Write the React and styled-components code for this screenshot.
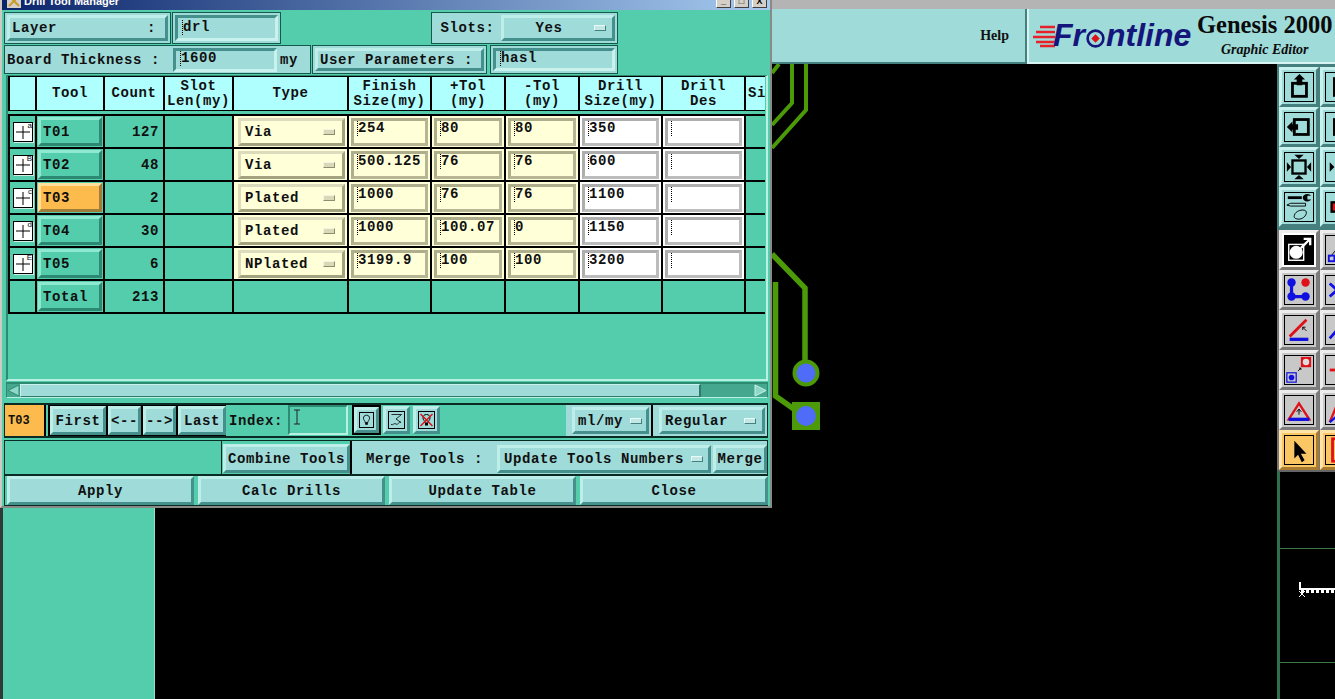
import React from 'react';
import styled, { createGlobalStyle, css } from 'styled-components';

const TEAL = '#54cdac';
const PANEL = '#9edbd9';
const mono = `'Liberation Mono', 'Courier New', monospace`;

const GlobalStyle = createGlobalStyle`
  html, body { margin: 0; padding: 0; background: #000; }
  body { width: 1335px; height: 699px; overflow: hidden; font-family: ${mono}; }
  * { box-sizing: border-box; }
`;

const raised = css`
  border: 3px solid;
  border-color: #bdeeea #45908c #45908c #bdeeea;
`;

const sunken = css`
  border: 3px solid;
  border-color: #45908c #c9f1ee #c9f1ee #45908c;
`;

/* ---------- application behind the dialog ---------- */

const Desktop = styled.div`
  position: relative;
  width: 1335px;
  height: 699px;
  overflow: hidden;
  display: grid;
  grid-template-rows: 9px 55px 1fr;
  background: #000;
`;

const TopStrip = styled.div`
  background: #b4b4b4;
`;

const TopBar = styled.div`
  display: flex;
  background: ${PANEL};
`;

const HelpArea = styled.div`
  width: 1027px;
  display: flex;
  align-items: center;
  justify-content: flex-end;
  padding-right: 16px;
  border-right: 2px solid #45807e;
  border-bottom: 2px solid #45807e;
  font: bold 14px 'Liberation Serif', serif;
  color: #111;
`;

const LogoArea = styled.div`
  flex: 1;
  display: flex;
  align-items: center;
  border-left: 2px solid #d8f4f2;
  border-bottom: 2px solid #d8f4f2;
  padding-left: 4px;
`;

const Speed = styled.svg`
  width: 22px;
  height: 24px;
  margin: 1px -2px 0 0;
`;

const Frontline = styled.div`
  display: flex;
  align-items: center;
  font: italic bold 32px 'Liberation Sans', sans-serif;
  color: #14167c;
  width: 142px;
`;

const OGlyph = styled.svg`
  width: 21px;
  height: 21px;
  margin: 6px 0 0 0;
`;

const Product = styled.div`
  display: flex;
  flex-direction: column;
  align-items: center;
  font-family: 'Liberation Serif', serif;
  color: #0b0b0b;
  margin-left: 2px;
  margin-top: 1px;
`;

const ProductName = styled.div`
  font-size: 24.5px;
  font-weight: bold;
  line-height: 28px;
  white-space: nowrap;
`;

const ProductSub = styled.div`
  font-size: 14px;
  font-weight: bold;
  font-style: italic;
  line-height: 22px;
`;

const Main = styled.div`
  display: grid;
  grid-template-columns: 155px 1122px 58px;
  min-height: 0;
`;

const LeftPanel = styled.div`
  background: ${TEAL};
  border-left: 3px solid #2f3a38;
  border-right: 1px solid #8fe0cc;
`;

const Canvas = styled.div`
  background: #000;
  overflow: hidden;
`;

const Traces = styled.svg`
  display: block;
`;

const RightColumn = styled.div`
  display: flex;
  flex-direction: column;
  overflow: hidden;
`;

const PaletteGroup = styled.div`
  height: ${({ $h }) => $h}px;
  padding: ${({ $pt }) => $pt}px 0 0 2px;
  display: grid;
  grid-template-columns: 40px 40px;
  grid-auto-rows: 40px;
  column-gap: 1px;
  background: ${({ $bg }) => $bg};
`;

const PaletteBtn = styled.div`
  width: 40px;
  height: 40px;
  padding: 2px;
  border: 3px solid;
  background: ${({ $tone }) =>
    $tone === 'teal' ? PANEL :
    $tone === 'orange' ? '#fbc765' :
    $tone === 'black' ? '#fff' : '#c8c8c8'};
  border-color: ${({ $tone }) =>
    $tone === 'teal' ? '#c9f1ee #45807e #45807e #c9f1ee' :
    $tone === 'orange' ? '#ffe3a8 #a87c30 #a87c30 #ffe3a8' :
    '#ededed #7c7c7c #7c7c7c #ededed'};
  svg { display: block; width: 100%; height: 100%; border: 1px solid #000; }
`;

const Preview = styled.div`
  flex: 1;
  display: flex;
  flex-direction: column;
  border-left: 3px solid #2f6f50;
  border-top: 2px solid #666;
`;

const PreviewFrame = styled.div`
  margin-top: 76px;
  height: 115px;
  border-top: 1px solid #3c7a4a;
  border-bottom: 1px solid #3c7a4a;
  padding: 33px 0 0 19px;
`;

/* ---------- dialog ---------- */

const Dialog = styled.div`
  position: absolute;
  left: 0;
  top: -10px;
  width: 772px;
  height: 518px;
  border: 2px solid #cfcbc3;
  border-right-color: #8a8a86;
  border-bottom-color: #8a8a86;
  background: ${TEAL};
  display: flex;
  flex-direction: column;
`;

const TitleBar = styled.div`
  height: 18px;
  display: flex;
  align-items: center;
  gap: 3px;
  padding: 0 3px 0 5px;
  background: linear-gradient(90deg, #0a246a, #a6caf0);
  color: #fff;
  font: bold 11px 'Liberation Sans', sans-serif;
`;

const TitleIcon = styled.svg`
  width: 14px;
  height: 14px;
  background: #d4d0c8;
`;

const TitleText = styled.span`
  flex: 1;
`;

const WinBtn = styled.span`
  width: 15px;
  height: 14px;
  background: #d4d0c8;
  border: 1px solid;
  border-color: #fff #404040 #404040 #fff;
  color: #000;
  font: bold 9px 'Liberation Sans', sans-serif;
  line-height: 12px;
  text-align: center;
`;

const Body = styled.div`
  flex: 1;
  display: flex;
  flex-direction: column;
  padding: 2px 2px 0 2px;
  font: bold 14px ${mono};
  letter-spacing: 0.6px;
  color: #101010;
  min-height: 0;
`;

const FormRow = styled.div`
  height: ${({ $h }) => $h}px;
  margin-top: ${({ $mt }) => $mt || 0}px;
  display: flex;
  flex: none;
`;

const Panel = styled.div`
  width: ${({ $w }) => $w}px;
  margin-left: ${({ $ml }) => $ml || 0}px;
  display: flex;
  align-items: center;
  background: ${PANEL};
  border: 1px solid #145a4c;
  padding: 2px;
  white-space: nowrap;
  flex: none;
`;

const SlotsLabel = styled.span`
  width: 67px;
  text-align: center;
`;

const ThicknessField = styled.div`
  width: 104px;
  height: 24px;
  margin-left: 13px;
  display: flex;
  padding-left: 3px;
  ${sunken}
  background: ${PANEL};
  flex: none;
`;

const Unit = styled.span`
  margin-left: 3px;
`;

const LabelButton = styled.div`
  flex: 1;
  height: 100%;
  display: flex;
  align-items: center;
  padding-left: 2px;
  white-space: pre;
  ${raised}
  background: ${PANEL};
`;

const Field = styled.div`
  width: 100%;
  height: 100%;
  display: flex;
  padding: ${({ $pt }) => $pt ?? 0}px 0 0 3px;
  ${sunken}
  background: ${PANEL};
  flex: none;
`;

const Caret = styled.span`
  width: 3px;
  height: 16px;
  flex: none;
  margin-right: -1px;
  background:
    repeating-linear-gradient(#000 0 1px, transparent 1px 2px) center / 1px 100% no-repeat;
`;

const Value = styled.span`
  line-height: 15px;
  white-space: pre;
`;

const Indicator = styled.span`
  width: 12px;
  height: 6px;
  flex: none;
  background: ${({ $y }) => ($y ? '#d9d9b8' : '#c2e8e6')};
  border: 1px solid;
  border-color: ${({ $y }) => ($y ? '#f4f4e0 #8d8d70 #8d8d70 #f4f4e0' : '#e8fbfa #45807e #45807e #e8fbfa')};
`;

const OptionMenu = styled.div`
  flex: 1;
  height: 100%;
  display: flex;
  align-items: center;
  justify-content: space-between;
  padding: 0 ${({ $pr }) => $pr ?? 4}px 0 ${({ $pl }) => $pl ?? 3}px;
  ${raised}
  background: ${PANEL};
  white-space: pre;
`;

const OptionText = styled.span`
  flex: 1;
  text-align: center;
`;

const TableWindow = styled.div`
  flex: none;
  height: 306px;
  margin: 1px 0 0 2px;
  border-left: 2px solid #2f8a72;
  border-top: 1px solid #2f8a72;
  border-right: 2px solid #b8f1e2;
  border-bottom: 2px solid #b8f1e2;
  overflow: hidden;
`;

const TableClip = styled.div`
  width: 757px;
  overflow: hidden;
`;

const columns = '25px 66px 58px 67px 113px 81px 72px 72px 81px 81px 60px';

const HeadGrid = styled.div`
  width: 880px;
  height: 35px;
  display: grid;
  grid-template-columns: ${columns};
  gap: 2px;
  padding: 1px 2px;
  background: #000;
`;

const HeadCell = styled.div`
  background: #b0ffff;
  display: flex;
  align-items: center;
  justify-content: ${({ $left }) => ($left ? 'flex-start' : 'center')};
  padding-left: ${({ $left }) => ($left ? 2 : 0)}px;
  text-align: center;
  line-height: 15px;
  white-space: pre;
  overflow: hidden;
`;

const BodyGrid = styled.div`
  width: 880px;
  display: grid;
  grid-template-columns: ${columns};
  grid-auto-rows: 31px;
  gap: 2px;
  padding: 2px;
  margin-top: 3px;
  background: #000;
`;

const Cell = styled.div`
  display: flex;
  align-items: center;
  justify-content: ${({ $right }) => ($right ? 'flex-end' : 'flex-start')};
  padding-right: ${({ $right }) => ($right ? 4 : 0)}px;
  background: ${({ $bg }) => $bg || TEAL};
  min-width: 0;
`;

const PlusBox = styled.div`
  position: relative;
  width: 20px;
  height: 20px;
  margin-left: 3px;
  background: #fff;
  border: 1px solid #000;
  box-shadow: 1px 1px 0 #cfeee6;
`;

const PlusMark = styled.svg`
  display: block;
`;

const PlusTag = styled.span`
  position: absolute;
  right: 0;
  top: -2px;
  font: 8px 'Liberation Sans', sans-serif;
  letter-spacing: 0;
  line-height: 9px;
`;

const ToolBtn = styled.div`
  width: 64px;
  height: 29px;
  margin-left: 1px;
  display: flex;
  align-items: center;
  padding-left: 2px;
  border: 3px solid;
  border-color: ${({ $on }) => ($on ? '#ffdf9c #a07c3a #a07c3a #ffdf9c' : '#8fe8d0 #2c8a72 #2c8a72 #8fe8d0')};
  background: ${({ $on }) => ($on ? '#fdbb4d' : TEAL)};
`;

const TypeMenu = styled.div`
  width: 107px;
  height: 28px;
  margin-left: 4px;
  display: flex;
  align-items: center;
  justify-content: space-between;
  padding: 0 7px 0 4px;
  border: 3px solid;
  border-color: #dcdcbc #a2a27e #a2a27e #dcdcbc;
  background: #ffffd8;
`;

const CellField = styled.div`
  width: calc(100% - 4px);
  height: 28px;
  margin-left: 2px;
  display: flex;
  padding-left: 2px;
  border: 3px solid;
  border-color: ${({ $white }) => ($white ? '#aeaeae #bcbcbc #bcbcbc #aeaeae' : '#aeae8c #b6b694 #b6b694 #aeae8c')};
  background: ${({ $white }) => ($white ? '#fff' : '#ffffd8')};
`;

const ScrollBar = styled.div`
  flex: none;
  height: 16px;
  margin: 1px 0 0 2px;
  display: flex;
  align-items: center;
  background: #45a88e;
  border: 1px solid #2f8a72;
  border-top-width: 2px;
  border-bottom-color: #b8f1e2;
`;

const Arrow = styled.svg`
  flex: none;
  display: block;
`;

const Thumb = styled.div`
  height: 100%;
  width: 681px;
  background: ${PANEL};
  border: 1px solid;
  border-color: #c9f1ee #2f7a6c #2f7a6c #c9f1ee;
  border-right-width: 2px;
`;

const Trough = styled.div`
  flex: 1;
`;

const BorderRow = styled(FormRow)`
  border: 1px solid #0a2a24;
  border-width: 2px 1px 2px 1px;
  background: ${TEAL};
`;

const CurrentTool = styled.div`
  width: 41px;
  background: #fdbb4d;
  border-right: 2px solid #000;
  display: flex;
  align-items: center;
  padding-left: 3px;
  font: bold 12px ${mono};
  letter-spacing: 0;
`;

const NavGroup = styled.div`
  display: flex;
  background: #000;
  gap: 2px;
  padding: 0 0 0 2px;
  margin-left: 2px;
`;

const NavBtn = styled.div`
  width: ${({ $w }) => $w}px;
  display: flex;
  align-items: center;
  justify-content: center;
  padding-top: 1px;
  background: ${PANEL};
  ${raised}
  margin: 1px 0;
`;

const IndexLabel = styled.div`
  width: 62px;
  padding: 1px 0 0 3px;
  display: flex;
  align-items: center;
`;

const IndexField = styled.div`
  width: 60px;
  height: 30px;
  border: 2px solid;
  border-color: #2f8a72 #b8f1e2 #b8f1e2 #2f8a72;
  background: ${TEAL};
  padding: 2px 0 0 3px;
`;

const IconBtn = styled.div`
  width: ${({ $on }) => ($on ? 29 : 27)}px;
  height: ${({ $on }) => ($on ? 30 : 28)}px;
  margin: ${({ $on }) => ($on ? '0 1px 0 4px' : '1px 2px 0 1px')};
  border: ${({ $on }) => ($on ? '2px solid #000' : 'none')};
  flex: none;
`;

const IconFace = styled.div`
  width: 100%;
  height: 100%;
  padding: 2px;
  ${raised}
  background: ${PANEL};
  svg { display: block; width: 100%; height: 100%; border: 1px solid #000; }
`;

const Filler = styled.div`
  flex: 1;
`;

const UnitPanel = styled.div`
  width: ${({ $w }) => $w}px;
  background: ${PANEL};
  padding: 2px 2px 2px ${({ $pl }) => $pl}px;
  display: flex;
  border-right: ${({ $end }) => ($end ? 'none' : '2px solid #000')};
`;

const ActionRow = styled(FormRow)`
  border: 1px solid #0a2a24;
  background: ${TEAL};
`;

const MergeArea = styled.div`
  display: flex;
  height: 100%;
  padding: 4px 0 1px;
  background: ${PANEL};
  border-left: 2px solid #000;
`;

const CombineWrap = styled.div`
  display: flex;
  height: 100%;
  padding: 3px 0 1px 1px;
  border-left: 1px solid #0a2a24;
`;

const ActionBtn = styled.div`
  width: ${({ $w }) => $w}px;
  margin-left: ${({ $ml }) => $ml || 0}px;
  display: flex;
  align-items: center;
  justify-content: center;
  flex: none;
  ${raised}
  background: ${PANEL};
  white-space: pre;
`;

const MergeLabel = styled.div`
  width: 145px;
  display: flex;
  align-items: center;
  justify-content: center;
  flex: none;
  white-space: pre;
`;

const UpdateMenu = styled(OptionMenu)`
  flex: none;
  width: 214px;
`;

/* ---------- drawings ---------- */

const C = { red: '#e01018', blue: '#1010e0' };

const topIcons = [
  { a: <g><rect x="8" y="11" width="15" height="14" fill="none" stroke="#000" strokeWidth="3" /><path d="M15.5 1l6 6h-3v6h-6V7h-3z" /></g>, b: <rect x="9" y="6" width="16" height="18" fill="none" stroke="#000" strokeWidth="3" /> },
  { a: <g><rect x="10" y="7" width="15" height="16" fill="none" stroke="#000" strokeWidth="3" /><path d="M2 15l6-6v3h6v6H8v3z" /></g>, b: <rect x="9" y="7" width="16" height="16" fill="none" stroke="#000" strokeWidth="3" /> },
  { a: <g><rect x="8" y="8" width="14" height="14" fill="none" stroke="#000" strokeWidth="2.5" /><path d="M15 6.5L10 2h10zM15 23.5l-5 4.5h10zM6.5 15L2 10v10zM23.5 15l4.5-5v10z" /></g>, b: <g><rect x="11" y="7" width="8" height="16" fill="none" stroke="#000" strokeWidth="2.5" /><path d="M9 15l-5-5v10zM15 6l-4-4h8zM15 24l-4 4h8z" /></g> },
  { a: <g><path d="M3 5h15" stroke="#000" strokeWidth="3" /><path d="M24 1c-3 0-5 2-5 4s2 4 5 4c2 0 3-1 4-2h-4V3h4c-1-1-2-2-4-2z" /><path d="M2 13l4-2h16v3H6z" fill="none" stroke="#000" /><path d="M10 24c1-5 9-7 12-5 3 3-2 9-7 9-3 0-6-1-5-4z" fill="none" stroke="#000" /></g>, b: <g><rect x="6" y="10" width="13" height="10" fill={C.red} stroke="#000" strokeWidth="2.5" /></g> },
];

const lowerIcons = [
  { tone: 'black', a: <g><rect width="30" height="30" fill="#000" /><rect x="4" y="9" width="16" height="17" fill="#000" stroke="#fff" strokeWidth="1.5" /><circle cx="12" cy="17.5" r="7" fill="#fff" /><path d="M17 13l9-9M20 3h7v7" stroke="#fff" strokeWidth="2.5" fill="none" /></g>, b: <g><path d="M5 22L20 3" stroke="#000" /><rect x="3" y="21" width="6" height="6" fill="none" stroke={C.blue} strokeWidth="2" /></g> },
  { tone: 'gray', a: <g><path d="M7 7v15h15" fill="none" stroke={C.blue} strokeWidth="3.5" /><circle cx="7" cy="7" r="4.5" fill={C.blue} /><circle cx="7" cy="22" r="4.5" fill={C.blue} /><circle cx="22" cy="22" r="4.5" fill={C.blue} /><circle cx="22" cy="7" r="4.5" fill={C.red} /></g>, b: <path d="M4 8l8 7-8 7" fill="none" stroke={C.blue} strokeWidth="3" /> },
  { tone: 'gray', a: <g><path d="M5 22L23 4" stroke={C.red} strokeWidth="3" /><path d="M5 25h20" stroke={C.blue} strokeWidth="3.5" /><path d="M19 12l4 4M19 12v3M19 12h3" stroke="#000" fill="none" /></g>, b: <path d="M4 24L18 8" stroke={C.blue} strokeWidth="3" /> },
  { tone: 'gray', a: <g><rect x="17" y="1" width="11" height="11" fill={C.red} /><circle cx="22.5" cy="6.5" r="3.5" fill="#ddd" /><rect x="2" y="18" width="10" height="10" fill="none" stroke={C.blue} strokeWidth="1.3" /><circle cx="7" cy="23" r="3" fill={C.blue} /><path d="M14 16l3-3M15 13h2v2" stroke="#000" fill="none" /></g>, b: <path d="M4 15h14" stroke={C.red} strokeWidth="3" /> },
  { tone: 'gray', a: <g><path d="M4 25L15 8l11 17z" fill="none" stroke={C.red} strokeWidth="2.5" /><path d="M4 25h22" stroke={C.blue} strokeWidth="3.5" /><path d="M15 14v6M12.5 17l2.5-3 2.5 3" stroke="#000" fill="none" /></g>, b: <g><path d="M4 28L14 4" stroke={C.red} strokeWidth="2.5" /><path d="M4 28L16 18" stroke={C.blue} strokeWidth="2.5" /></g> },
  { tone: 'orange', a: <path d="M10 5v19l4-4 4 8 3-2-4-7h6z" />, b: <rect x="7" y="3" width="16" height="24" fill="none" stroke={C.red} strokeWidth="3" /> },
];

const Draw = ({ children }) => <svg viewBox="0 0 30 30">{children}</svg>;

const BulbIcon = () => (
  <Draw>
    <path d="M15 4c-5 0-7 3-7 7 0 4 4 6 4 10h6c0-4 4-6 4-10 0-4-2-7-7-7z" fill="none" stroke="#000" strokeWidth="2" />
    <rect x="12" y="21" width="6" height="5" fill="#000" />
  </Draw>
);

const WaveIcon = () => (
  <Draw>
    <path d="M5 4h20L14 13l10 7c-4-3-6 6-10 3s-5 3-10 1" fill="none" stroke="#000" strokeWidth="1.6" />
  </Draw>
);

const BulbOffIcon = () => (
  <Draw>
    <path d="M15 4c-5 0-7 3-7 7 0 4 4 6 4 10h6c0-4 4-6 4-10 0-4-2-7-7-7z" fill="none" stroke="#000" strokeWidth="2" />
    <rect x="12" y="21" width="6" height="5" fill="#000" />
    <path d="M3 3l24 24M27 3L3 27" stroke="#e01018" strokeWidth="3" />
  </Draw>
);

const rows = [
  { tool: 'T01', tag: 'a', count: '127', type: 'Via', finish: '254', plus: '80', minus: '80', drill: '350' },
  { tool: 'T02', tag: 'B', count: '48', type: 'Via', finish: '500.125', plus: '76', minus: '76', drill: '600' },
  { tool: 'T03', tag: 'c', count: '2', type: 'Plated', finish: '1000', plus: '76', minus: '76', drill: '1100', on: true },
  { tool: 'T04', tag: 'd', count: '30', type: 'Plated', finish: '1000', plus: '100.07', minus: '0', drill: '1150' },
  { tool: 'T05', tag: 'E', count: '6', type: 'NPlated', finish: '3199.9', plus: '100', minus: '100', drill: '3200' },
];

const heads = ['', 'Tool', 'Count', 'Slot\nLen(my)', 'Type', 'Finish\nSize(my)', '+Tol\n(my)', '-Tol\n(my)', 'Drill\nSize(my)', 'Drill\nDes'];

const CellInput = ({ value, white }) => (
  <CellField $white={white}>
    <Caret />
    <Value>{value}</Value>
  </CellField>
);

const ToolRow = ({ row }) => (
  <>
    <Cell>
      <PlusBox>
        <PlusMark width="18" height="18" viewBox="0 0 18 18">
          <path d="M9 3v13M2 9h14" stroke="#000" strokeWidth="1" />
        </PlusMark>
        <PlusTag>{row.tag}</PlusTag>
      </PlusBox>
    </Cell>
    <Cell><ToolBtn $on={row.on}>{row.tool}</ToolBtn></Cell>
    <Cell $right>{row.count}</Cell>
    <Cell />
    <Cell $bg="#ffffd8">
      <TypeMenu>{row.type}<Indicator $y /></TypeMenu>
    </Cell>
    <Cell $bg="#ffffd8"><CellInput value={row.finish} /></Cell>
    <Cell $bg="#ffffd8"><CellInput value={row.plus} /></Cell>
    <Cell $bg="#ffffd8"><CellInput value={row.minus} /></Cell>
    <Cell $bg="#fff"><CellInput value={row.drill} white /></Cell>
    <Cell $bg="#fff"><CellInput value="" white /></Cell>
    <Cell />
  </>
);

const App = () => (
  <>
    <GlobalStyle />
    <Desktop>
      <TopStrip />
      <TopBar>
        <HelpArea>Help</HelpArea>
        <LogoArea>
          <Speed viewBox="0 0 22 24">
            <path d="M7 3h15M3 8h19M0 13h22M3 18h19M7 22h15" stroke="#e8202a" strokeWidth="2.4" />
          </Speed>
          <Frontline>
            Fr
            <OGlyph viewBox="0 0 20 20">
              <circle cx="10" cy="10" r="7.5" fill="none" stroke="#14167c" strokeWidth="2.5" />
              <path d="M10 6l4 4-4 4-4-4z" fill="#e01018" />
            </OGlyph>
            ntline
          </Frontline>
          <Product>
            <ProductName>Genesis 2000</ProductName>
            <ProductSub>Graphic Editor</ProductSub>
          </Product>
        </LogoArea>
      </TopBar>
      <Main>
        <LeftPanel />
        <Canvas>
          <Traces width="1122" height="635" viewBox="155 64 1122 635">
            <g fill="none" stroke="#4c9a08" strokeWidth="4">
              <path d="M806 64v46l-34 38" />
              <path d="M792 64v39l-20 22" />
              <path d="M779 64l-7 9" />
            </g>
            <g fill="none" stroke="#4c9a08" strokeWidth="5.5">
              <path d="M772 254l33 34v85" />
              <path d="M775.5 282v114l24 17" />
            </g>
            <circle cx="806" cy="373" r="11.5" fill="#4e6cf8" stroke="#4c9a08" strokeWidth="4" />
            <rect x="792" y="402" width="28" height="28" fill="#4c9a08" />
            <circle cx="806" cy="416" r="10" fill="#4e6cf8" />
          </Traces>
        </Canvas>
        <RightColumn>
          <PaletteGroup $h={166} $pt={3} $bg="#45807e">
            {topIcons.map((icon, i) => (
              <React.Fragment key={i}>
                <PaletteBtn $tone="teal"><Draw>{icon.a}</Draw></PaletteBtn>
                <PaletteBtn $tone="teal"><Draw>{icon.b}</Draw></PaletteBtn>
              </React.Fragment>
            ))}
          </PaletteGroup>
          <PaletteGroup $h={240} $pt={0} $bg="#777">
            {lowerIcons.map((icon, i) => (
              <React.Fragment key={i}>
                <PaletteBtn $tone={icon.tone}><Draw>{icon.a}</Draw></PaletteBtn>
                <PaletteBtn $tone={icon.tone === 'black' ? 'gray' : icon.tone}><Draw>{icon.b}</Draw></PaletteBtn>
              </React.Fragment>
            ))}
          </PaletteGroup>
          <Preview>
            <PreviewFrame>
              <svg width="40" height="16" viewBox="0 0 40 16">
                <path d="M1 0v7h39" fill="none" stroke="#fff" strokeWidth="2" />
                <path d="M2 9.5h38" stroke="#fff" strokeWidth="3" strokeDasharray="3 2" />
                <path d="M0 9l6 6M6 9l-6 6" stroke="#fff" />
              </svg>
            </PreviewFrame>
          </Preview>
        </RightColumn>
      </Main>

      <Dialog>
        <TitleBar>
          <TitleIcon viewBox="0 0 14 14">
            <path d="M2 2l10 10M12 2L2 12" stroke="#c89a28" strokeWidth="2" />
          </TitleIcon>
          <TitleText>Drill Tool Manager</TitleText>
          <WinBtn>_</WinBtn>
          <WinBtn>□</WinBtn>
          <WinBtn>X</WinBtn>
        </TitleBar>
        <Body>
          <FormRow $h={32}>
            <Panel $w={167}>
              <LabelButton>{'Layer          :'}</LabelButton>
            </Panel>
            <Panel $w={109} $ml={1}>
              <Field $pt={2}><Caret /><Value>drl</Value></Field>
            </Panel>
            <Panel $w={187} $ml={150}>
              <SlotsLabel>Slots:</SlotsLabel>
              <OptionMenu $pl={0} $pr={6}>
                <OptionText>Yes</OptionText>
                <Indicator />
              </OptionMenu>
            </Panel>
          </FormRow>
          <FormRow $h={29} $mt={1}>
            <Panel $w={307}>
              <span>Board Thickness :</span>
              <ThicknessField><Caret /><Value>1600</Value></ThicknessField>
              <Unit>my</Unit>
            </Panel>
            <Panel $w={175} $ml={1}>
              <LabelButton>User Parameters :</LabelButton>
            </Panel>
            <Panel $w={128} $ml={3}>
              <Field $pt={0}><Caret /><Value>hasl</Value></Field>
            </Panel>
          </FormRow>
          <TableWindow>
            <TableClip>
              <HeadGrid>
                {heads.map((h, i) => <HeadCell key={i}>{h}</HeadCell>)}
                <HeadCell $left>Si</HeadCell>
              </HeadGrid>
              <BodyGrid>
                {rows.map((r) => <ToolRow key={r.tool} row={r} />)}
                <Cell />
                <Cell><ToolBtn>Total</ToolBtn></Cell>
                <Cell $right>213</Cell>
                <Cell /><Cell /><Cell /><Cell /><Cell /><Cell /><Cell /><Cell />
              </BodyGrid>
            </TableClip>
          </TableWindow>
          <ScrollBar>
            <Arrow width="13" height="13" viewBox="0 0 13 13">
              <path d="M1 6.5L12 1v11z" fill="#8fd8c8" stroke="#2f8a72" />
            </Arrow>
            <Thumb />
            <Trough />
            <Arrow width="13" height="13" viewBox="0 0 13 13">
              <path d="M12 6.5L1 1v11z" fill="#8fd8c8" stroke="#c9f1ee" />
            </Arrow>
          </ScrollBar>
          <BorderRow $h={35} $mt={5}>
            <CurrentTool>T03</CurrentTool>
            <NavGroup>
              <NavBtn $w={56}>First</NavBtn>
              <NavBtn $w={33}>{'<--'}</NavBtn>
              <NavBtn $w={33}>{'-->'}</NavBtn>
              <NavBtn $w={48}>Last</NavBtn>
            </NavGroup>
            <IndexLabel>Index:</IndexLabel>
            <IndexField>
              <svg width="8" height="16" viewBox="0 0 8 16">
                <path d="M1 1h6M4 1v14M1 15h6" stroke="#222" fill="none" />
              </svg>
            </IndexField>
            <IconBtn $on><IconFace><BulbIcon /></IconFace></IconBtn>
            <IconBtn><IconFace><WaveIcon /></IconFace></IconBtn>
            <IconBtn><IconFace><BulbOffIcon /></IconFace></IconBtn>
            <Filler />
            <UnitPanel $w={87} $pl={6}>
              <OptionMenu>ml/my<Indicator /></OptionMenu>
            </UnitPanel>
            <UnitPanel $w={114} $pl={6} $end>
              <OptionMenu $pr={6}>Regular<Indicator /></OptionMenu>
            </UnitPanel>
          </BorderRow>
          <ActionRow $h={35} $mt={2}>
            <Filler />
            <CombineWrap>
              <ActionBtn $w={127}>Combine Tools</ActionBtn>
            </CombineWrap>
            <MergeArea>
              <MergeLabel>Merge Tools :</MergeLabel>
              <UpdateMenu $pl={4} $pr={5}>Update Tools Numbers<Indicator /></UpdateMenu>
              <ActionBtn $w={54} $ml={2}>Merge</ActionBtn>
            </MergeArea>
          </ActionRow>
          <ActionRow $h={31}>
            <ActionBtn $w={187} $ml={2}>Apply</ActionBtn>
            <ActionBtn $w={187} $ml={4}>Calc Drills</ActionBtn>
            <ActionBtn $w={187} $ml={4}>Update Table</ActionBtn>
            <ActionBtn $w={188} $ml={4}>Close</ActionBtn>
          </ActionRow>
        </Body>
      </Dialog>
    </Desktop>
  </>
);

export default App;
